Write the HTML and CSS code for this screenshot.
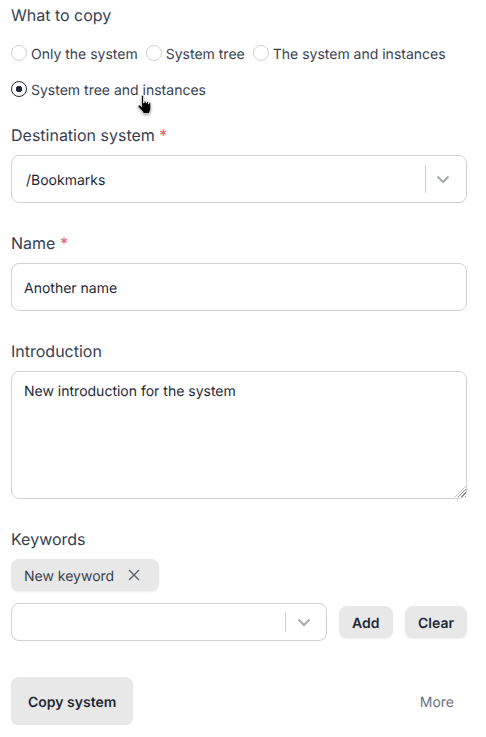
FILE: index.html
```html
<!DOCTYPE html>
<html lang="en">
<head>
    <meta charset="UTF-8">
    <meta name="viewport" content="width=device-width, initial-scale=1.0">
    <title>Copy system</title>
    <link rel="stylesheet" href="styles.css">
</head>
<body>
    <form class="copy-form">
        <div class="field field-copy">
            <div class="label">What to copy</div>
            <div class="radio-group">
                <label class="radio"><span class="radio-mark"></span><span class="text">Only the system</span></label>
                <label class="radio"><span class="radio-mark"></span><span class="text">System tree</span></label>
                <label class="radio"><span class="radio-mark"></span><span class="text">The system and instances</span></label>
                <label class="radio"><span class="radio-mark checked"></span><span class="text">System tree and instances</span></label>
            </div>
            <svg class="cursor" width="20" height="24" viewBox="0 0 20 24">
                <path d="M6.5 2.5c0-1.3 2-1.3 2 0v6.5h.6V7.8c0-1.2 1.9-1.2 1.9 0V9h.5v-.7c0-1.2 1.9-1.2 1.9 0V10h.5v-.6c0-1.1 1.8-1.1 1.8 0v5.3c0 1.6-.6 2.6-1.2 3.6v1.2H8v-1.5L3.4 13c-1-1.2.5-2.6 1.7-1.6l1.4 1.3z" fill="#000" stroke="#fff" stroke-width=".7"/>
            </svg>
        </div>

        <div class="field field-dest">
            <div class="label">Destination system <span class="required">*</span></div>
            <div class="select select-tall">
                <span class="select-value text">/Bookmarks</span>
                <span class="select-sep"></span>
                <svg class="chevron" width="20" height="20" viewBox="0 0 20 20"><path d="M4.5 7.5 10 13l5.5-5.5" fill="none" stroke="#a8abb3" stroke-width="2.2"/></svg>
            </div>
        </div>

        <div class="field field-name">
            <div class="label">Name <span class="required">*</span></div>
            <input class="input" type="text" value="Another name">
        </div>

        <div class="field field-intro">
            <div class="label">Introduction</div>
            <textarea class="input textarea">New introduction for the system</textarea>
            <span class="resize-grip"></span>
        </div>

        <div class="field field-keywords">
            <div class="label">Keywords</div>
            <div class="tag">
                <span class="text">New keyword</span>
                <svg width="14" height="14" viewBox="0 0 14 14"><path d="M2 2l10 10M12 2 2 12" fill="none" stroke="#5b616e" stroke-width="1.4"/></svg>
            </div>
            <div class="keyword-row">
                <div class="select select-short">
                    <span class="select-value"></span>
                    <span class="select-sep"></span>
                    <svg class="chevron" width="20" height="20" viewBox="0 0 20 20"><path d="M4.5 7.5 10 13l5.5-5.5" fill="none" stroke="#a8abb3" stroke-width="2.2"/></svg>
                </div>
                <button type="button" class="btn btn-small btn-add">Add</button>
                <button type="button" class="btn btn-small">Clear</button>
            </div>
        </div>

        <div class="actions">
            <button type="button" class="btn btn-large">Copy system</button>
            <a class="more text">More</a>
        </div>
    </form>
</body>
</html>
```

FILE: styles.css
```css
body {
    margin: 0;
    background-color: #ffffff;
    font-family: "Inter", sans-serif;
    font-size: 14px;
    color: #1f2937;
    overflow: hidden;
    text-rendering: geometricPrecision;
}

.copy-form {
    padding: 5px 19px 0 11px;
}

.field {
    position: relative;
}

.text {
    margin-top: 2px;
}

.label {
    font-size: 16px;
    line-height: 21px;
    color: #374151;
}

.required {
    color: #e5636b;
}

.radio-group {
    display: flex;
    flex-wrap: wrap;
    column-gap: 8px;
    margin-top: 9px;
}

.radio {
    display: flex;
    align-items: center;
    gap: 4px;
    height: 36px;
    color: #374151;
}

.radio-mark {
    box-sizing: border-box;
    width: 16px;
    height: 16px;
    border: 1px solid #d1d1d1;
    border-radius: 50%;
}

.radio-mark.checked {
    border-color: #1f2937;
    background: radial-gradient(circle, #1f2937 0 3px, #ffffff 3.5px);
}

.cursor {
    position: absolute;
    left: 124px;
    top: 89px;
    filter: drop-shadow(0 1px 1px rgba(0, 0, 0, 0.4));
}

.field-dest {
    margin-top: 18px;
}

.field-name {
    margin-top: 30px;
}

.field-intro {
    margin-top: 30px;
}

.field-keywords {
    margin-top: 30px;
}

.select {
    display: flex;
    align-items: center;
    box-sizing: border-box;
    border: 1px solid #d1d1d1;
    border-radius: 8px;
    background-color: #ffffff;
}

.select-tall {
    height: 48px;
    margin-top: 9px;
    padding-left: 14px;
}

.select-short {
    flex: 1;
    height: 38px;
}

.select-value {
    flex: 1;
}

.select-sep {
    width: 1px;
    height: 60%;
    background-color: #d1d1d1;
}

.select-short .select-sep {
    height: 20px;
}

.chevron {
    margin: 0 13px 0 7px;
}

.select-short .chevron {
    margin: 0 12px 0 8px;
}

.input {
    display: block;
    box-sizing: border-box;
    width: 100%;
    height: 48px;
    margin-top: 9px;
    padding: 2px 12px 0;
    border: 1px solid #d1d1d1;
    border-radius: 8px;
    font-family: inherit;
    font-size: 14px;
    color: #1f2937;
    text-rendering: geometricPrecision;
}

.textarea {
    height: 128px;
    padding: 11px 12px 10px;
    resize: none;
}

.resize-grip {
    position: absolute;
    right: 1px;
    bottom: 2px;
    width: 11px;
    height: 11px;
    background: repeating-linear-gradient(135deg, #8c8c8c 0 1px, #ffffff 1px 2.4px);
    clip-path: polygon(100% 0, 100% 100%, 0 100%);
}

.tag {
    display: inline-flex;
    align-items: center;
    gap: 13px;
    height: 32px;
    margin-top: 9px;
    padding: 0 18px 0 13px;
    border-radius: 8px;
    background-color: #e8e8e8;
    color: #374151;
    box-shadow: 0 1px 2px rgba(0, 0, 0, 0.08);
}

.keyword-row {
    display: flex;
    align-items: center;
    gap: 12px;
    margin-top: 12px;
}

.btn {
    border: none;
    border-radius: 8px;
    background-color: #e8e8e8;
    font-family: inherit;
    font-size: 14px;
    font-weight: 600;
    color: #1f2937;
    box-shadow: 0 1px 2px rgba(0, 0, 0, 0.08);
    text-rendering: geometricPrecision;
}

.btn-small {
    height: 32px;
    padding: 2px 13px 0;
}

.btn-add {
    padding: 2px 13.5px 0;
}

.actions {
    display: flex;
    align-items: center;
    justify-content: space-between;
    margin-top: 36px;
}

.btn-large {
    height: 48px;
    padding: 2px 17px 0;
}

.more {
    margin-right: 13px;
    color: #6b7280;
}
```
